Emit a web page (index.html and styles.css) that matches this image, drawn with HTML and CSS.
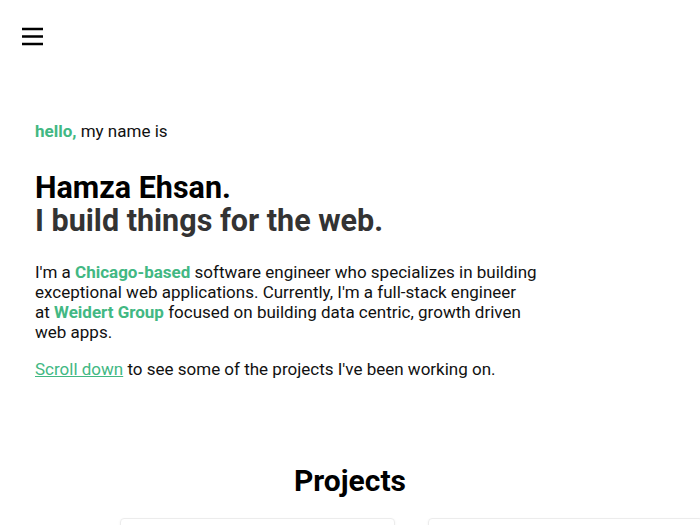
FILE: index.html
```html
<!DOCTYPE html>
<html lang="en">
<head>
<meta charset="utf-8">
<title>Hamza Ehsan</title>
<link rel="stylesheet" href="styles.css">
</head>
<body>
<header class="topbar">
  <button class="menu" aria-label="Menu">
    <svg width="24" height="21" viewBox="0 0 24 21"><path d="M1 3h21M1 10.5h21M1 18h21" stroke="#000" stroke-width="2.4" fill="none"/></svg>
  </button>
</header>
<main>
  <section class="hero">
    <p class="hello"><span class="accent">hello,</span> my name is</p>
    <h1 class="title"><span class="name">Hamza Ehsan.</span><span class="tag">I build things for the web.</span></h1>
    <p class="bio">I'm a <span class="accent">Chicago-based</span> software engineer who specializes in building exceptional web applications. Currently, I'm a full-stack engineer at&nbsp;<span class="accent">Weidert Group</span> focused on building data centric, growth driven web apps.</p>
    <p class="bio"><a class="link" href="#projects">Scroll down</a> to see some of the projects I've been working on.</p>
  </section>
  <section class="projects" id="projects">
    <h2 class="projects-title">Projects</h2>
    <div class="cards">
      <div class="card"></div>
      <div class="card"></div>
    </div>
  </section>
</main>
</body>
</html>
```
FILE: styles.css
```css
html, body {
  margin: 0;
  padding: 0;
  background: #fff;
  color: #111;
  font-family: Roboto, "Liberation Sans", sans-serif;
  overflow: hidden;
}
.topbar {
  padding: 26px 0 0 21px;
  height: 24px;
}
.menu {
  border: 0;
  background: none;
  padding: 0;
  margin: 0;
  display: block;
}
.menu svg { display: block; }
.hero {
  padding: 71px 0 0 35px;
  max-width: 505px;
}
.hello {
  margin: 0;
  font-size: 17px;
  line-height: 20px;
}
.accent {
  color: #42b883;
  font-weight: 700;
}
.title {
  margin: 30px 0 0 0;
  font-size: 30.5px;
  line-height: 33px;
  font-weight: 700;
}
.name { display: block; color: #000; }
.tag { display: block; color: #333; }
.bio {
  margin: 25px 0 0 0;
  font-size: 17px;
  line-height: 20px;
  color: #111;
}
.bio + .bio { margin-top: 17px; }
.link {
  color: #42b883;
  text-decoration: underline;
}
.projects {
  padding-top: 84px;
}
.projects-title {
  margin: 0;
  text-align: center;
  font-size: 30px;
  line-height: 36px;
  font-weight: 700;
  color: #000;
}
.cards {
  display: flex;
  gap: 33px;
  margin: 19px 0 0 120px;
}
.card {
  flex: 0 0 273px;
  height: 200px;
  border: 1px solid #ececec;
  border-radius: 4px;
  box-shadow: 0 1px 3px rgba(0,0,0,0.05);
}
```
